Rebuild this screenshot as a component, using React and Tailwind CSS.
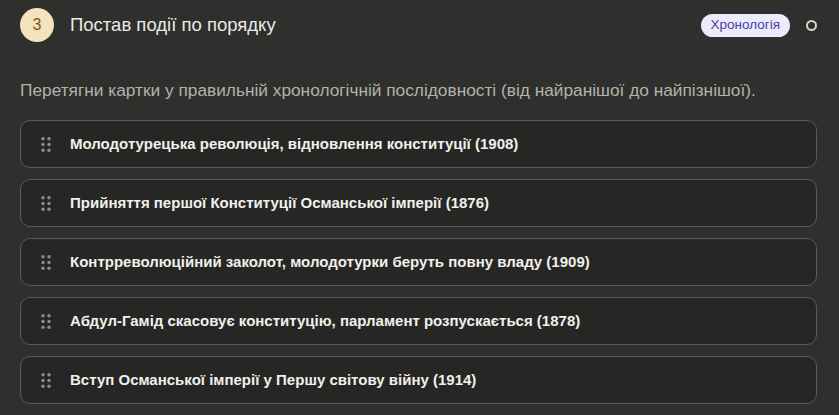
import React from 'react';

const events = [
  'Молодотурецька революція, відновлення конституції (1908)',
  'Прийняття першої Конституції Османської імперії (1876)',
  'Контрреволюційний заколот, молодотурки беруть повну владу (1909)',
  'Абдул-Гамід скасовує конституцію, парламент розпускається (1878)',
  'Вступ Османської імперії у Першу світову війну (1914)',
];

const Grip = () => (
  <svg width="10" height="15" viewBox="0 0 10 15" className="shrink-0">
    {[1.8, 7.5, 13.2].map((y) =>
      [2, 8].map((x) => <circle key={`${x}-${y}`} cx={x} cy={y} r="1.7" fill="#8d8c87" />)
    )}
  </svg>
);

const App = () => {
  return (
    <div
      className="w-[839px] h-[415px] overflow-hidden bg-[#2f2f2d] text-[#ecebe6]"
      style={{ fontFamily: '"Liberation Sans", Arial, sans-serif' }}
    >
      {/* Header */}
      <div className="flex items-center h-[50px] pl-5 pr-[22px]">
        <div className="w-[34px] h-[34px] rounded-full bg-[#f3e3bc] text-[#85561a] flex items-center justify-center text-[16px]">
          3
        </div>
        <h2 className="ml-[16px] text-[18.5px] text-[#ebeae5]">Постав події по порядку</h2>
        <span className="ml-auto h-[23px] px-[10px] rounded-full bg-[#ecebfc] text-[#4a3da3] text-[13.5px] flex items-center">
          Хронологія
        </span>
        <span className="ml-[16px] w-[11px] h-[11px] rounded-full border-2 border-[#d6d5d0]" />
      </div>

      {/* Instruction */}
      <p className="pl-5 mt-[28px] text-[17.3px] leading-[24px] text-[#b4b2aa]">
        Перетягни картки у правильній хронологічній послідовності (від найранішої до найпізнішої).
      </p>

      {/* Cards */}
      <div className="flex flex-col gap-[11px] pl-5 pr-[22px] mt-[18px]">
        {events.map((e) => (
          <div
            key={e}
            className="h-[48px] flex items-center gap-[19px] pl-[20px] rounded-[10px] border border-[#5b5a55] bg-[#262624]"
          >
            <Grip />
            <span className="text-[15px] font-bold text-[#f1f0eb]">{e}</span>
          </div>
        ))}
      </div>
    </div>
  );
};

export default App;
